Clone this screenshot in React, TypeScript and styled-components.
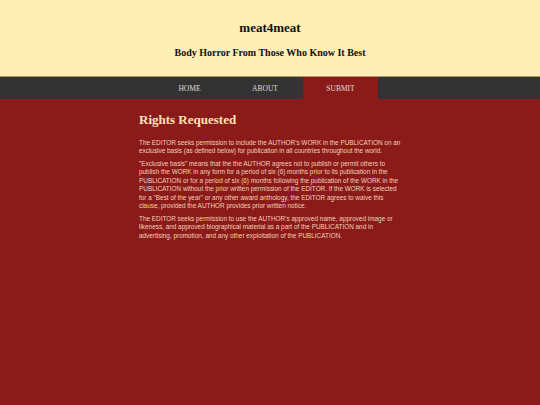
import React from "react";
import styled, { createGlobalStyle } from "styled-components";

const Global = createGlobalStyle`
  html, body { margin: 0; padding: 0; background: #8b1a1a; }
  #root { min-height: 405px; }
`;

const Page = styled.div`
  min-height: 405px;
  background: #8b1a1a;
  display: flex;
  flex-direction: column;
`;

const Header = styled.header`
  background: #ffeeb5;
  height: 76px;
  border-bottom: 1px solid #b09a6a;
  display: flex;
  flex-direction: column;
  align-items: center;
  font-family: "Liberation Serif", "Times New Roman", serif;
  color: #111;
`;

const Title = styled.h1`
  margin: 20px 0 0;
  font-size: 13px;
  line-height: 15px;
  font-weight: bold;
`;

const Subtitle = styled.h2`
  margin: 11.5px 0 0;
  font-size: 10px;
  line-height: 12px;
  font-weight: bold;
`;

const Nav = styled.nav`
  background: #333333;
  height: 22px;
  display: flex;
  justify-content: center;
`;

const NavList = styled.ul`
  list-style: none;
  margin: 0 10px 0 0;
  padding: 0;
  display: flex;
`;

const NavItem = styled.li<{ $active?: boolean }>`
  width: 75.5px;
  display: flex;
  align-items: center;
  justify-content: center;
  background: ${(p) => (p.$active ? "#8b1a1a" : "transparent")};
  color: #e0dcd6;
  font-family: "Liberation Serif", "Times New Roman", serif;
  font-size: 7.5px;
  text-transform: uppercase;
`;

const Main = styled.main`
  width: 262px;
  margin: 0 auto;
  padding: 13px 0 0;
`;

const Heading = styled.h2`
  margin: 0 0 11.5px;
  font-family: "Liberation Serif", "Times New Roman", serif;
  font-size: 13px;
  line-height: 15px;
  font-weight: bold;
  color: #ffe2b4;
`;

const Para = styled.p`
  margin: 0 0 4px;
  font-family: "Liberation Sans", Arial, sans-serif;
  font-size: 6.4px;
  line-height: 8.5px;
  color: #f3d2b4;
`;

export default function App() {
  return (
    <>
      <Global />
      <Page>
        <Header>
          <Title>meat4meat</Title>
          <Subtitle>Body Horror From Those Who Know It Best</Subtitle>
        </Header>
        <Nav>
          <NavList>
            <NavItem>Home</NavItem>
            <NavItem>About</NavItem>
            <NavItem $active>Submit</NavItem>
          </NavList>
        </Nav>
        <Main>
          <Heading>Rights Requested</Heading>
          <Para>
            The EDITOR seeks permission to include the AUTHOR's WORK in the PUBLICATION on an
            exclusive basis (as defined below) for publication in all countries throughout the world.
          </Para>
          <Para>
            "Exclusive basis" means that the the AUTHOR agrees not to publish or permit others to
            publish the WORK in any form for a period of six (6) months prior to its publication in the
            PUBLICATION or for a period of six (6) months following the publication of the WORK in the
            PUBLICATION without the prior written permission of the EDITOR. If the WORK is selected
            for a "Best of the year" or any other award anthology, the EDITOR agrees to waive this
            clause, provided the AUTHOR provides prior written notice.
          </Para>
          <Para>
            The EDITOR seeks permission to use the AUTHOR's approved name, approved image or
            likeness, and approved biographical material as a part of the PUBLICATION and in
            advertising, promotion, and any other exploitation of the PUBLICATION.
          </Para>
        </Main>
      </Page>
    </>
  );
}
